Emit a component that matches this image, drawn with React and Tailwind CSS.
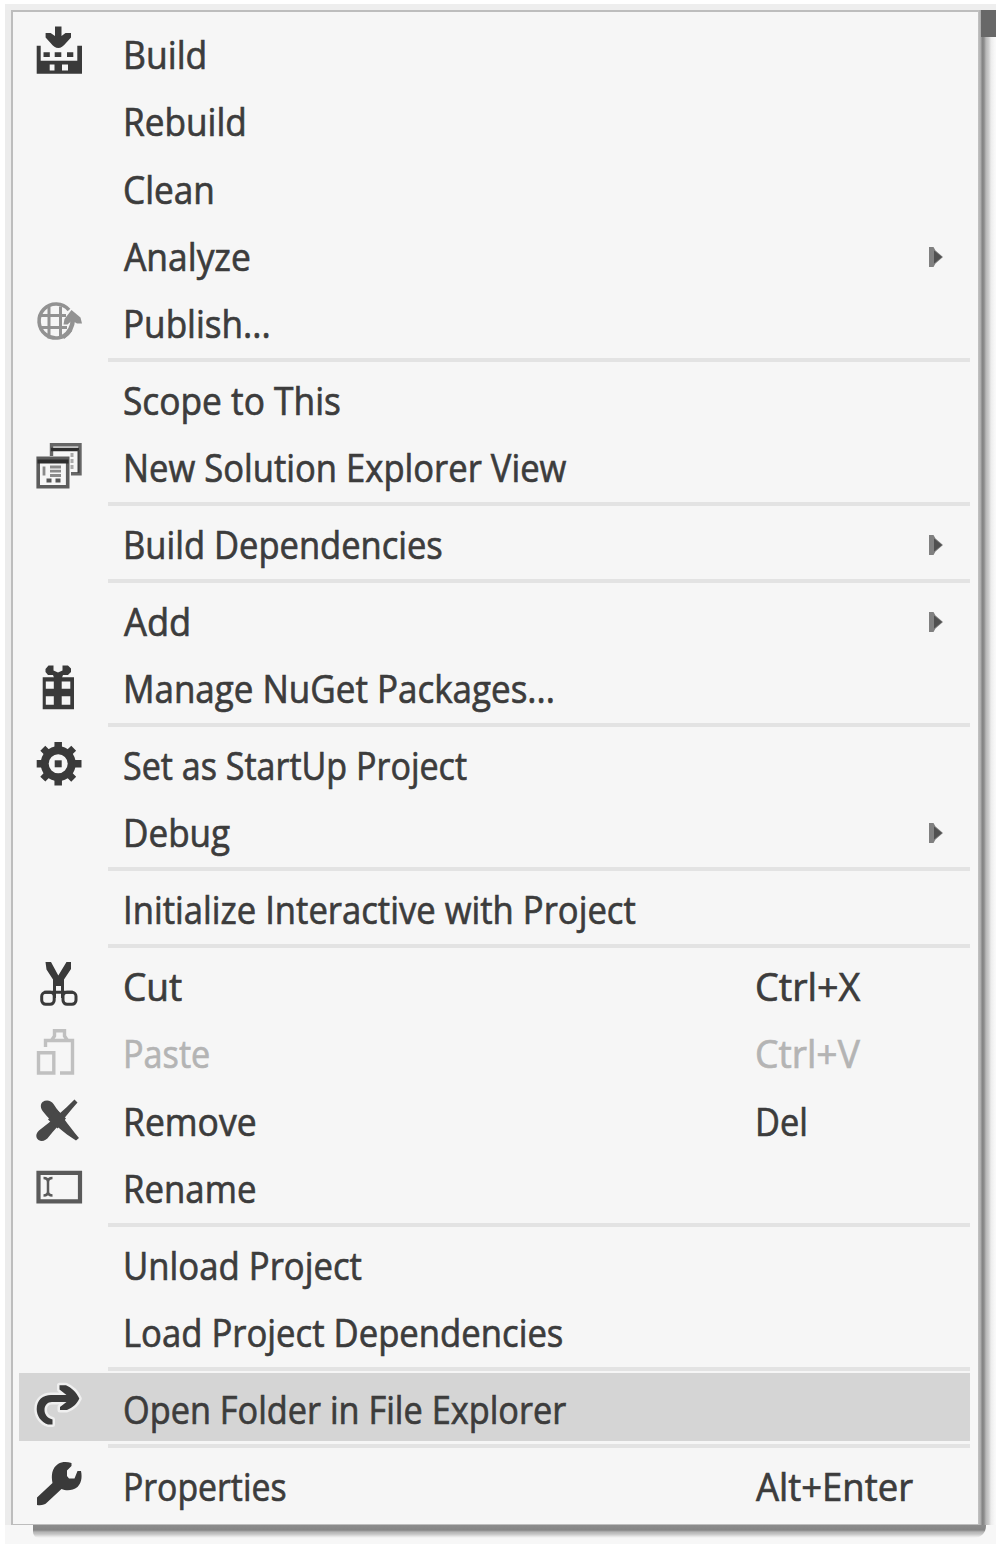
import React from "react";

const INK = "#3a3a3a";

const Icon = ({ children }) => (
  <svg viewBox="0 0 48 67.4" className="block h-[67.4px] w-12 overflow-visible" fill="none">
    {children}
  </svg>
);

const BuildIcon = () => (
  <Icon>
    <g fill={INK}>
      <path d="M19 8.500h6.500v9.500l4-3h5.500v4.500l-5 5.500c-3 3.500-5 5-7.700 5s-5-1.500-7.700-5l-5-5.500V15h5l4.400 3z" />
      <path d="M.7 27.700h4v15h36.600v-15h4.700v28H.7z" />
      <path d="M7.500 34.200h6.300v4.800H7.500zM18.700 34.200h6.600v4.800h-6.600zM31 34.200h6.300v4.800H31z" />
    </g>
    <path d="M13.700 46.500h4.800v6h-4.800zM26 46.500h6v6h-6z" fill="#f6f6f6" />
  </Icon>
);

const PublishIcon = () => (
  <Icon>
    <g stroke="#929292" strokeWidth="3.600">
      <path d="M33 22A17 17 0 1 0 34.500 42" />
      <path d="M13 18.500v32M24.500 18.500v32M3 27.500h27M3 39.500h28" strokeWidth="3" />
      <path d="M27 49c6-3.500 9.500-9 10-18" strokeWidth="4.500" />
    </g>
    <path d="M28.500 31l7-9 9 7.500 1.500 6h-5l-5-3-4.500 4h-4z" fill="#929292" />
  </Icon>
);

const ViewsIcon = () => (
  <Icon>
    <path d="M15.500 24V12.700h28.500v29h-9" stroke="#666" strokeWidth="3.400" />
    <path d="M15 17.500h28" stroke="#2e2e2e" strokeWidth="3.500" />
    <path d="M42.500 18v23" stroke="#444" strokeWidth="2" />
    <path d="M36 21v17" stroke="#aaa" strokeWidth="3" strokeDasharray="4 2" />
    <path d="M2.200 26.200h29.500v28.500H2.200z" fill="#f6f6f6" stroke="#5c5c5c" strokeWidth="3.600" />
    <path d="M1.500 29.500h31" stroke="#2e2e2e" strokeWidth="4" />
    <path d="M8 34.500v9M14 35h11M14 39.200h11M14 43.500h11" stroke="#8a8a8a" strokeWidth="2.800" />
    <path d="M10.500 48.500h5M19.500 48.500h5" stroke="#555" strokeWidth="4" />
  </Icon>
);

const GiftIcon = () => (
  <Icon>
    <path fillRule="evenodd" fill={INK} d="M6.700 24.300h31.300v32H6.700zM9.800 28.500v7.300h8v-7.300zM25.700 28.500v7.300h8.600v-7.300zM9.800 43.300v8.400h8v-8.400zM25.700 43.300v8.400h8.600v-8.400z" />
    <path fill={INK} d="M12.500 12.500h5v5l4.500 2 4.500-2v-5h5.500l3 3v3.500l-3 3h-5l-1.500 4h-7l-1.500-4h-5l-2.500-3v-3z" />
  </Icon>
);

const GearIcon = () => (
  <Icon>
    <g stroke={INK}>
      <circle cx="22.200" cy="33.700" r="13.500" strokeWidth="8" />
      <path d="M22.200 12v6M22.200 49.500v6M.7 33.700h6M38 33.700h7.500" strokeWidth="7.500" />
      <path d="M6.800 18.300l4.500 4.500M33 44.500l4.700 4.700M37.700 18.300L33 22.800M11.300 44.500l-4.500 4.700" strokeWidth="7" />
    </g>
    <path d="M18.700 30.300h7v7h-7z" fill={INK} />
  </Icon>
);

const CutIcon = () => (
  <Icon>
    <path d="M9.500 12h5.500l7.300 13.500L30.500 12h4.500v7l-7 10.500V36h-11v-6.500l-6.500-10z" fill={INK} />
    <g stroke={INK} strokeWidth="3">
      <path d="M18.500 34v14M26.500 34v14M8 42.300h29" />
      <rect x="5.700" y="42.300" width="12.500" height="12" rx="4" />
      <rect x="27" y="42.300" width="13" height="12" rx="4" />
    </g>
  </Icon>
);

const PasteIcon = () => (
  <Icon>
    <g stroke="#c0c0c0" strokeWidth="3.400">
      <path d="M9.500 29v-6.500h27V55H24" />
      <path d="M15.500 22.500l3-4.500v-5.200h10V18l3 4.500" />
      <path d="M2.500 34.800h15.300V55H2.500z" />
    </g>
  </Icon>
);

const RemoveIcon = () => (
  <Icon>
    <g fill="#484848">
      <path d="M6.500 17c4-2.500 8.500-1.500 11 2 6 9 14 20 25.500 34l-3 2.500C28 48 16 38 7 26.500c-2.500-3-3-7-.5-9.500z" />
      <path d="M38.500 14.500l3 3C33 27 23 40 13 51.500c-3 4-7 6-10.500 3.500-3-2.500-3-6.500.5-9.500C16 36 28 25 38.500 14.500z" />
      <path d="M21 24.500l9 9-8.500 10-9.500-9z" />
    </g>
  </Icon>
);

const RenameIcon = () => (
  <Icon>
    <path d="M2.500 19.800h41.500v28.500H2.500z" stroke="#5a5a5a" strokeWidth="4.200" />
    <path d="M7.500 25c3 0 4.500 1.500 4.500 4v9.500c0 2.500-1.500 4-4.500 4M16.500 25c-3 0-4.500 1.500-4.500 4v9.500c0 2.500 1.500 4 4.500 4" stroke="#5a5a5a" strokeWidth="2.500" />
  </Icon>
);

const OPEN_ARROW =
  "M23.500 12.300h6.500c5 2 10.500 7 13.300 13.300C41 31 36.500 35 31 37h-7v-3l6.500-5H16c-4.500 0-7.500 3.500-7.500 8 0 4 2.500 8 8 9.500v5h-4.500C5 49 .7 43 .700 36 .700 27 7 22 15 22h15.500l-7-5.500z";

const OpenIcon = () => (
  <Icon>
    <path d={OPEN_ARROW} stroke="#efefef" strokeWidth="5" strokeLinejoin="round" />
    <path d={OPEN_ARROW} fill={INK} />
  </Icon>
);

const WrenchIcon = () => (
  <Icon>
    <path fill={INK} d="M22 14c4-2.500 9-2.500 13.500-1v3l-4.500 4.500V26l2 2.500h5.500l3-7.500h3.500c1.500 7 0 12.500-3.500 16-5 4-11.500 4-16 2L11 52.500c-2 2.500-6 3-10 2.500v-7.500l15.500-14.500c-1.500-8-.5-15 5.500-19z" />
  </Icon>
);

const Arrow = () => (
  <svg viewBox="0 0 14 20" className="mt-[5px] mr-[27px] h-5 w-3.5">
    <path d="M0 0h4.500l2 3.500 7.500 6.500-7.500 6.500-2 3.500H0z" fill="#808080" />
    <path d="M5 3.500l8 6.500-8 6.500z" fill="#505050" />
  </svg>
);

const GROUPS = [
  [
    { label: "Build", fit: "scale-x-[0.91]", icon: <BuildIcon /> },
    { label: "Rebuild", fit: "scale-x-[0.902]" },
    { label: "Clean", fit: "scale-x-[0.902]" },
    { label: "Analyze", fit: "scale-x-[0.907] ml-px", sub: true },
    { label: "Publish...", fit: "scale-x-[0.9]", icon: <PublishIcon /> },
  ],
  [
    { label: "Scope to This", fit: "scale-x-[0.905]" },
    { label: "New Solution Explorer View", fit: "scale-x-[0.887]", icon: <ViewsIcon /> },
  ],
  [{ label: "Build Dependencies", fit: "scale-x-[0.885]", sub: true }],
  [
    { label: "Add", fit: "scale-x-[0.93] ml-px", sub: true },
    { label: "Manage NuGet Packages...", fit: "scale-x-[0.897]", icon: <GiftIcon /> },
  ],
  [
    { label: "Set as StartUp Project", fit: "scale-x-[0.873]", icon: <GearIcon /> },
    { label: "Debug", fit: "scale-x-[0.899]", sub: true },
  ],
  [{ label: "Initialize Interactive with Project", fit: "scale-x-[0.888]" }],
  [
    { label: "Cut", fit: "scale-x-[0.95]", icon: <CutIcon />, keys: "Ctrl+X", keysFit: "scale-x-[0.966]" },
    { label: "Paste", fit: "scale-x-[0.877]", icon: <PasteIcon />, keys: "Ctrl+V", keysFit: "scale-x-[0.955]", disabled: true },
    { label: "Remove", fit: "scale-x-[0.909]", icon: <RemoveIcon />, keys: "Del", keysFit: "scale-x-[0.88]" },
    { label: "Rename", fit: "scale-x-[0.892]", icon: <RenameIcon /> },
  ],
  [
    { label: "Unload Project", fit: "scale-x-[0.89]" },
    { label: "Load Project Dependencies", fit: "scale-x-[0.889]" },
  ],
  [{ label: "Open Folder in File Explorer", fit: "scale-x-[0.879]", icon: <OpenIcon />, active: true }],
  [{ label: "Properties", fit: "scale-x-[0.866]", icon: <WrenchIcon />, keys: "Alt+Enter", keysFit: "scale-x-[0.935] ml-px" }],
];

function Item({ label, fit, icon, sub, keys, keysFit, disabled, active }) {
  return (
    <div
      className={`flex h-[67.4px] w-[951px] items-center whitespace-nowrap text-[39px] leading-[67.4px] [-webkit-text-stroke:0.7px_currentColor] ${
        active ? "bg-[#d5d5d5]" : ""
      } ${disabled ? "text-[#b4b4b4]" : "text-[#3c3c3c]"}`}
    >
      <div className="ml-[17px] w-[87px] shrink-0">{icon}</div>
      <div className="w-[632px] shrink-0 pt-[3px]">
        <span className={`inline-block origin-left ${fit}`}>{label}</span>
      </div>
      <div className="flex-1 pt-[3px]">
        {keys && <span className={`inline-block origin-left ${keysFit}`}>{keys}</span>}
      </div>
      {sub && <Arrow />}
    </div>
  );
}

export default function App() {
  return (
    <div className="h-[1550px] w-[1004px] overflow-hidden bg-white pt-1 pl-[5px] font-['Open_Sans',sans-serif]">
      <div className="flex h-[1540px] w-[991px] flex-col bg-[#f7f7f7]">
        <div className="h-[6px] shrink-0 bg-[#eeeeee]" />
        <div className="flex h-[1515px] shrink-0">
          <div className="w-[6px] bg-[#ececec]" />
          <div className="w-[967px] border-t-2 border-b border-l-2 border-[#bdbdbd] bg-[#f6f6f6] pt-[6.3px] pl-[6px]">
            {GROUPS.map((items, i) => (
              <React.Fragment key={i}>
                {i > 0 && (
                  <div className="flex h-[9.35px] items-center pl-[89px]">
                    <div className="h-1 w-[862px] bg-[#e3e3e3]" />
                  </div>
                )}
                {items.map((item) => (
                  <Item key={item.label} {...item} />
                ))}
              </React.Fragment>
            ))}
          </div>
          <div className="w-[18px] bg-[linear-gradient(to_right,#c4c4c4_0px,#aaaaaa_3px,#828282_4px,#8c8c8c_6px,#b8b8b8_8px,#cfcfcf_11px,#ececec_13px,#f9f9f9_17px)]">
            <div className="ml-[3px] h-[27px] bg-[#686868]" />
          </div>
        </div>
        <div className="flex shrink-0">
          <div className="w-[28px]" />
          <div className="h-[13px] w-[953px] rounded-bl-md rounded-br-xl bg-[linear-gradient(to_bottom,#8c8c8c_0px,#858585_5px,#b5b5b5_7px,#c4c4c4_9px,#eeeeee_12px,#f7f7f7_13px)]" />
        </div>
      </div>
    </div>
  );
}
